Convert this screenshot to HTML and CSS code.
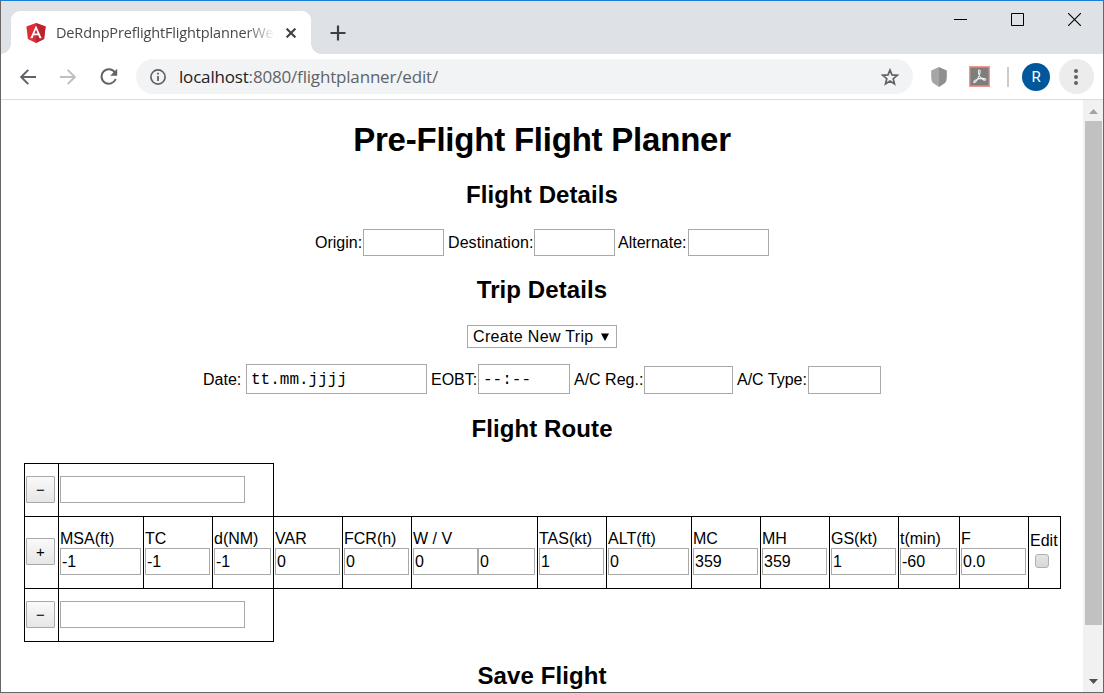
FILE: index.html
```html
<!DOCTYPE html>
<html lang="en">
<head>
<meta charset="utf-8">
<title>Pre-Flight Flight Planner</title>
<link rel="stylesheet" href="styles.css">
</head>
<body>
<div class="window">
  <div class="tabstrip">
    <div class="tab">
      <svg class="favicon" width="20" height="20" viewBox="0 0 20 20"><path fill="#dd2e38" d="M10 0 19.6 3.4 18.1 16 10 20 1.9 16 .4 3.4z"/><path fill="#b9242f" d="M10 0 19.6 3.4 18.1 16 10 20z"/><path fill="#fff" fill-rule="evenodd" d="M10 2.4 4.3 15.2h2.2l1.2-3h4.6l1.2 3h2.2zM10 6.6l1.6 3.9H8.4z"/></svg>
      <span class="tab-title">DeRdnpPreflightFlightplannerWe</span>
      <svg class="tab-close" width="10" height="10" viewBox="0 0 10 10"><path d="M.6.6l8.8 8.8M9.4.6.6 9.4" stroke="#3c4043" stroke-width="2.1"/></svg>
    </div>
    <svg class="tab-new" width="16" height="16" viewBox="0 0 16 16"><path d="M8 .5v15M.5 8h15" stroke="#3c4043" stroke-width="2.2"/></svg>
    <div class="controls">
      <svg width="13" height="13" viewBox="0 0 13 13"><path d="M0 6.5h13" stroke="#000"/></svg>
      <svg width="13" height="13" viewBox="0 0 13 13"><path d="M.5.5h12v12H.5z" stroke="#000" fill="none"/></svg>
      <svg width="13" height="13" viewBox="0 0 13 13"><path d="M0 0l13 13M13 0 0 13" stroke="#000" stroke-width="1.1"/></svg>
    </div>
  </div>
  <div class="toolbar">
    <svg class="nav back" width="16" height="16" viewBox="0 0 16 16"><path d="M16 8H1.5M8.3.9 1.2 8l7.1 7.1" stroke="#5f6368" stroke-width="2" fill="none"/></svg>
    <svg class="nav forward" width="16" height="16" viewBox="0 0 16 16"><path d="M0 8h14.5M7.7.9 14.8 8l-7.1 7.1" stroke="#bdc1c6" stroke-width="2" fill="none"/></svg>
    <svg class="nav" width="18" height="18" viewBox="0 0 18 18"><path d="M15.1 4.7A7.3 7.3 0 1 0 15.7 11" stroke="#5f6368" stroke-width="2" fill="none"/><path d="M17.2.8v7h-7z" fill="#5f6368"/></svg>
    <div class="omnibox">
      <svg width="16" height="16" viewBox="0 0 16 16"><circle cx="8" cy="8" r="7.1" fill="none" stroke="#5f6368" stroke-width="1.7"/><path d="M8 3.8v1.8M8 7v5" stroke="#5f6368" stroke-width="1.8"/></svg>
      <span class="url"><b>localhost</b>:8080/flightplanner/edit/</span>
      <svg class="star" width="18" height="18" viewBox="0 0 18 18"><path d="M9 2l2 4.9 5.3.4-4.1 3.4 1.3 5.2L9 13.1l-4.5 2.8 1.3-5.2L1.7 7.3 7 6.9z" fill="none" stroke="#5f6368" stroke-width="1.7"/></svg>
    </div>
    <svg class="ext" width="16" height="20" viewBox="0 0 16 20"><path fill="#a6a6a6" d="M8 0v20L2 16Q.2 14 .2 10V3.5z"/><path fill="#8f8f8f" d="M8 0v20l6-4q1.8-2 1.8-6V3.5z"/></svg>
    <svg class="pdf" width="21" height="21" viewBox="0 0 21 21"><path fill="#7d7d7d" stroke="#f0968a" stroke-width="1.4" d="M.7.7h19.6v19.6H.7z"/><path d="M4.8 16.4c-1-1.6 4.5-4 8.7-4 4 0 4.200 2.300 1.500 1.700-3-.8-5.900-5.300-5.600-8.800.2-2.100 2.200-1.600 1.800.7-.6 3.600-4.300 11.900-6.400 10.400z" fill="none" stroke="#eee" stroke-width="1.1"/></svg>
    <span class="divider"></span>
    <span class="avatar">R</span>
    <span class="menu"><svg width="4" height="16" viewBox="0 0 4 16"><g fill="#5f6368"><circle cx="2" cy="2" r="2"/><circle cx="2" cy="8" r="2"/><circle cx="2" cy="14" r="2"/></g></svg></span>
  </div>
  <div class="viewport">
    <main class="page">
      <h1>Pre-Flight Flight Planner</h1>
      <h2>Flight Details</h2>
      <div class="line details">
        <label class="w48">Origin:</label><input class="i81">
        <label class="w86 gap4">Destination:</label><input class="i81">
        <label class="w70 gap3">Alternate:</label><input class="i81">
      </div>
      <h2>Trip Details</h2>
      <div class="select"><span>Create New Trip</span><svg width="8" height="8" viewBox="0 0 8 8"><path d="M0 .5h8L4 8z"/></svg></div>
      <div class="line trip">
        <label class="w43">Date:</label><div class="field date">tt.mm.jjjj</div>
        <label class="w47 gap4">EOBT:</label><div class="field time">--:--</div>
        <label class="w70 gap4">A/C Reg.:</label><input class="reg">
        <label class="w71 gap4">A/C Type:</label><input class="type">
      </div>
      <h2>Flight Route</h2>
      <div class="route">
        <div class="row point"><div class="cell act"><button>−</button></div><div class="cell"><input class="i185"></div></div>
        <div class="row leg">
          <div class="cell act"><button>+</button></div>
          <div class="cell"><span>MSA(ft)</span><input class="i81" value="-1"></div>
          <div class="cell"><span>TC</span><input class="i65" value="-1"></div>
          <div class="cell"><span>d(NM)</span><input class="i57" value="-1"></div>
          <div class="cell"><span>VAR</span><input class="i65" value="0"></div>
          <div class="cell"><span>FCR(h)</span><input class="i65" value="0"></div>
          <div class="cell"><span>W / V</span><div class="pair"><input class="i65" value="0"><input class="i57" value="0"></div></div>
          <div class="cell"><span>TAS(kt)</span><input class="i65" value="1"></div>
          <div class="cell"><span>ALT(ft)</span><input class="i81" value="0"></div>
          <div class="cell"><span>MC</span><input class="i65" value="359"></div>
          <div class="cell"><span>MH</span><input class="i65" value="359"></div>
          <div class="cell"><span>GS(kt)</span><input class="i65" value="1"></div>
          <div class="cell"><span>t(min)</span><input class="i57" value="-60"></div>
          <div class="cell"><span>F</span><input class="i65" value="0.0"></div>
          <div class="cell edit"><span>Edit</span><i class="check"></i></div>
        </div>
        <div class="row point last"><div class="cell act"><button>−</button></div><div class="cell"><input class="i185"></div></div>
      </div>
      <h2>Save Flight</h2>
    </main>
    <div class="scrollbar">
      <svg width="9" height="5" viewBox="0 0 9 5"><path fill="#a3a3a3" d="M0 5 4.5 0 9 5z"/></svg>
      <div class="thumb"></div>
      <svg width="9" height="5" viewBox="0 0 9 5"><path fill="#505050" d="M0 0h9L4.5 5z"/></svg>
    </div>
  </div>
</div>
</body>
</html>
```
FILE: styles.css
```css
* { box-sizing: border-box; }
body { margin: 0; font: 16px/18px "Liberation Sans", Arial, sans-serif; color: #000; }
svg { display: block; flex: none; }
.window { width: 1104px; height: 693px; border: 1px solid #666; border-top-color: #1a7fd4; background: #fff; overflow: hidden; display: flex; flex-direction: column; }
.tabstrip { height: 53px; flex: none; background: #dee1e6; display: flex; padding: 10px 22px 0 10px; }
.tab { position: relative; width: 300px; height: 43px; background: #fff; border-radius: 9px 9px 0 0; display: flex; align-items: center; padding: 0 15px; }
.tab::before, .tab::after { content: ""; position: absolute; bottom: 0; width: 10px; height: 10px; }
.tab::before { left: -10px; background: radial-gradient(circle at 0 0, transparent 9.5px, #fff 10px); }
.tab::after { right: -10px; background: radial-gradient(circle at 100% 0, transparent 9.5px, #fff 10px); }
.tab-title { width: 219px; margin-left: 10px; font: 14.5px/20px "Open Sans", sans-serif; letter-spacing: -0.15px; white-space: nowrap; overflow: hidden; color: #45484c; -webkit-mask-image: linear-gradient(90deg, #000 190px, transparent 219px); mask-image: linear-gradient(90deg, #000 190px, transparent 219px); }
.tab-close { margin-left: 11px; }
.tab-new { margin: 14px 0 0 19px; }
.controls { display: flex; gap: 44px; margin: 2px 0 0 auto; }
.toolbar { height: 46px; flex: none; border-bottom: 1px solid #dadce0; display: flex; align-items: center; padding: 0 9px 0 19px; }
.nav { margin-right: 18px; }
.nav.back { margin-right: 24px; }
.nav.forward { margin-right: 24px; }
.omnibox { width: 777px; height: 35px; border-radius: 18px; background: #f1f3f4; display: flex; align-items: center; padding: 0 14px 0 14px; }
.url { margin-left: 13px; font: 17px/24px "Open Sans", sans-serif; letter-spacing: -0.18px; color: #5f6368; }
.url b { font-weight: 400; color: #202124; }
.star { margin-left: auto; }
.ext { margin-left: 18px; }
.pdf { margin-left: 22px; }
.divider { width: 2px; height: 20px; background: #ccc; margin-left: 17px; }
.avatar { width: 28px; height: 28px; border-radius: 50%; background: #01579b; color: #fff; font: 15px/28px Roboto, sans-serif; text-align: center; margin-left: 13px; }
.menu { width: 35px; height: 35px; border-radius: 50%; background: #ececec; display: flex; align-items: center; justify-content: center; margin-left: 9px; padding-right: 1px; }
.viewport { flex: 1; display: flex; min-height: 0; overflow: hidden; }
.page { width: 1082px; overflow: hidden; display: flex; flex-direction: column; align-items: center; }
h1 { margin: 21px 0 0; font-size: 33px; line-height: 37px; letter-spacing: -0.22px; white-space: nowrap; }
h2 { margin: 0; font-size: 24px; line-height: 27px; letter-spacing: 0.1px; }
h1 + h2 { margin-top: 23px; }
.line { display: flex; white-space: nowrap; }
.details { margin: 21px 0 20px; align-items: center; }
input, .field { display: block; margin: 0; border: 1px solid #a9a9a9; padding: 1px; height: 27px; background: #fff; font: 16px "Liberation Sans", Arial, sans-serif; color: #000; border-radius: 0; outline: none; }
.i81 { width: 81px; }
.i65 { width: 65px; }
.i57 { width: 57px; }
.i185 { width: 185px; }
.w43 { width: 43px; }
.w47 { width: 47px; }
.w48 { width: 48px; }
.w70 { width: 70px; }
.w71 { width: 71px; }
.w86 { width: 86px; letter-spacing: 0.08px; }
.gap3 { margin-left: 3px; }
.gap4 { margin-left: 4px; }
.select { width: 150px; height: 23px; margin-top: 22px; border: 1px solid #a9a9a9; display: flex; align-items: center; padding-left: 5px; letter-spacing: 0.33px; }
.select svg { margin-left: 7px; }
.trip { margin: 16px 0 21px; align-items: flex-end; }
.trip label { line-height: 18px; margin-bottom: 5px; }
.field { height: 30px; font: 16px/29px "Liberation Mono", monospace; padding: 1px 4px 0; }
.date { width: 181px; }
.time { width: 92px; }
.reg { width: 89px; height: 28px; }
.type { width: 73px; height: 28px; }
.route { align-self: flex-start; width: 1037px; margin: 21px 0 20px 23px; }
.row { display: grid; border: 1px solid #000; border-bottom: 0; }
.point { grid-template-columns: 33px 215px; width: 250px; height: 53px; }
.leg { grid-template-columns: 33px 85px 69px 61px 69px 69px 126px 69px 85px 69px 69px 69px 61px 69px 32px; height: 73px; border-bottom: 1px solid #000; }
.last { height: 53px; border-top: 0; border-bottom: 1px solid #000; }
.cell { border-left: 1px solid #000; padding: 12px 0 0 1px; display: flex; flex-direction: column; }
.cell.act { border-left: 0; }
.leg .cell.act { padding-top: 21px; }
.cell span { line-height: 19px; white-space: nowrap; }
.pair { display: flex; }
button { width: 29px; height: 27px; margin: 0; padding: 0 0 1px; border: 1px solid #a9a9a9; border-radius: 1px; background: linear-gradient(#fafafa, #e6e6e6); font: 15px "Liberation Sans", Arial, sans-serif; color: #000; }
.leg .cell.edit { padding-top: 14px; }
.check { display: block; width: 14px; height: 14px; margin: 4px 0 0 5px; border: 1px solid #b0b0b0; border-radius: 3px; background: linear-gradient(#e4e4e4, #d8d8d8); }
.scrollbar { width: 20px; background: #f1f1f1; display: flex; flex-direction: column; align-items: center; padding-top: 9px; }
.thumb { width: 17px; height: 504px; margin: 7px 0 54px; flex: none; background: #c1c1c1; }
```
